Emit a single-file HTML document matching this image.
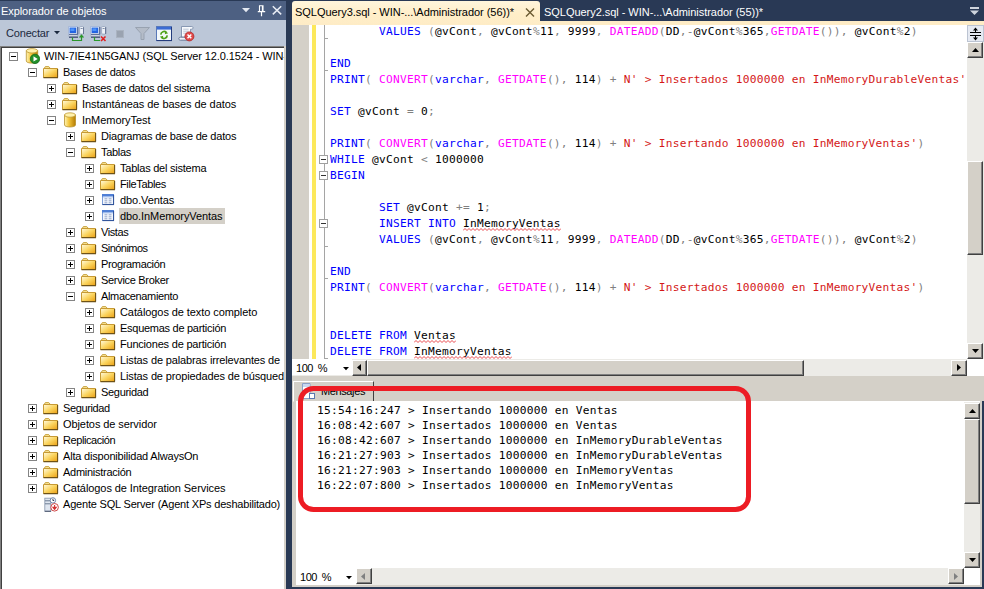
<!DOCTYPE html>
<html lang="es"><head><meta charset="utf-8"><title>SQL Server Management Studio</title>
<style>
html,body{margin:0;padding:0;}
body{width:984px;height:589px;overflow:hidden;background:#293955;position:relative;font-family:"Liberation Sans", "DejaVu Sans", sans-serif;font-size:11px;color:#000;}
.abs{position:absolute;}
#oe{left:0;top:0;width:286px;height:589px;background:#bcc7d8;overflow:hidden;}
#oe-title{left:0;top:1px;width:286px;height:19px;background:#4d6082;color:#fff;}
#oe-title span{position:absolute;left:1px;top:4px;font-size:11px;line-height:13px;white-space:nowrap;}
#oe-tb{left:0;top:20px;width:286px;height:26px;background:#bcc7d8;}
#tree{left:0;top:46px;width:284px;height:543px;background:#fff;border-left:1px solid #808080;border-top:1px solid #808080;box-sizing:border-box;overflow:hidden;}
#oe-right{left:284px;top:46px;width:2px;height:543px;background:#d4d0c8;}
.row{position:absolute;height:16px;white-space:nowrap;font-size:11px;line-height:16px;}
.row .t{position:absolute;top:0;height:16px;padding:0 2px;line-height:17px;}
.row .t.sel{background:#d4d0c8;}
.exp{position:absolute;width:7px;height:7px;border:1px solid #848484;background:#fff;top:4px;}
.exp i{position:absolute;left:1px;top:3px;width:5px;height:1px;background:#000;}
.exp b{position:absolute;left:3px;top:1px;width:1px;height:5px;background:#000;}
.ico{position:absolute;top:0;width:16px;height:16px;}
#tabs{left:292px;top:0;width:692px;height:25px;}
#tab1{left:0;top:1px;width:248px;height:24px;background:linear-gradient(#fff5dc,#ffeec8 55%,#feecc6);border-radius:3px 3px 0 0;}
#tabband{left:0;top:21px;width:692px;height:4px;background:#feecc6;}
.tabtxt{position:absolute;top:6px;font-size:11px;line-height:13px;white-space:nowrap;}
#ed{left:292px;top:25px;width:675px;height:334px;background:#fff;overflow:hidden;}
#ed-margin{left:0;top:0;width:17px;height:334px;background:#d4d0c8;}
#ed-yellow{left:20px;top:0;width:4px;height:334px;background:#fce85a;}
#ed-line{left:32px;top:0;width:1px;height:334px;background:#a5a5a5;}
.tick{position:absolute;left:32px;width:4px;height:1px;background:#a5a5a5;}
.obox{position:absolute;left:27px;width:7px;height:7px;border:1px solid #a0a0a0;background:#fff;}
.obox i{position:absolute;left:1px;top:3px;width:5px;height:1px;background:#333;}
.cl{position:absolute;left:38px;height:16px;line-height:16px;white-space:pre;font-family:"DejaVu Sans Mono", "Liberation Mono", monospace;font-size:11.2px;letter-spacing:0.258px;color:#000;margin-top:1px;}
.k{color:#0000ff;} .f{color:#ff00ff;} .s{color:#d41818;} .g{color:#808080;}
.sq{background-repeat:repeat-x;background-position:0 100%;}
.sb{background:#ecebe7;}
.btn{position:absolute;box-sizing:border-box;background:#d4d0c8;border:1px solid;border-color:#fff #404040 #404040 #fff;box-shadow:inset -1px -1px 0 #808080;}
.msg{position:absolute;left:21px;height:15px;line-height:15px;white-space:pre;font-family:"DejaVu Sans Mono", "Liberation Mono", monospace;font-size:11.2px;letter-spacing:0.258px;color:#000;margin-top:1px;}
</style></head>
<body>
<svg width="0" height="0" style="position:absolute"><defs><linearGradient id="fg" x1="0" y1="0" x2="1" y2="1"><stop offset="0" stop-color="#fffbe2"/><stop offset="0.5" stop-color="#fbd560"/><stop offset="1" stop-color="#ea9f14"/></linearGradient><linearGradient id="dg" x1="0" y1="0" x2="1" y2="0"><stop offset="0" stop-color="#fff6b8"/><stop offset="0.4" stop-color="#f4c63c"/><stop offset="1" stop-color="#b47c04"/></linearGradient></defs></svg>
<div id="oe" class="abs">
<div class="abs" style="left:0;top:0;width:286px;height:1px;background:#293955"></div>
<div id="oe-title" class="abs"><span id="ttl" style="letter-spacing:-0.072px;">Explorador de objetos</span><svg class="abs" style="left:240px;top:4px" width="46" height="13" viewBox="0 0 46 13"><path d="M2 3 H10 L6 7.2 Z" fill="#e4e9f2"/><path d="M19.5 6 V0.8 H23 V6 M22.4 1 V6" stroke="#fff" stroke-width="1.1" fill="none"/><path d="M17.8 6.6 H25.2 M21.5 7 V11.3" stroke="#fff" stroke-width="1.2" fill="none"/><path d="M32.8 1.2 L41.2 9.4 M41.2 1.2 L32.8 9.4" stroke="#e8ecf4" stroke-width="1.5" fill="none"/></svg></div>
<div id="oe-tb" class="abs">
<span class="abs" id="con" style="left:6px;top:7px;font-size:11px;line-height:13px;color:#1b293e;letter-spacing:-0.168px;">Conectar</span>
<svg class="abs" style="left:54px;top:11px" width="6" height="4"><path d="M0 0 H6 L3 3.2 Z" fill="#1b293e"/></svg>
<svg class="abs" style="left:68px;top:6px" width="16" height="16" viewBox="0 0 16 16"><rect x="0.6" y="0.6" width="9" height="7.6" fill="#dce6f6" stroke="#9fb2d6" stroke-width="0.8"/><rect x="1.6" y="1.6" width="6.6" height="5.4" fill="#2464e0"/><rect x="2.4" y="2.4" width="4" height="2.6" fill="#4c94fc"/><path d="M9.8 1 V8.4 H1" stroke="#34467c" stroke-width="0.9" fill="none"/><rect x="0.8" y="9" width="9" height="1.6" fill="#e4e9f2" stroke="#93a1ba" stroke-width="0.6"/><path d="M1 11.2 H10" stroke="#26325c" stroke-width="1"/><rect x="11.6" y="0.5" width="4" height="7.6" rx="1" fill="#eef2f8" stroke="#93a1ba" stroke-width="0.8"/><path d="M15.7 1.2 V8" stroke="#4a5878" stroke-width="0.8"/><rect x="12.6" y="2" width="2" height="1" fill="#7f8ea8"/><path d="M4.5 11.5 V14.5 H13.5 V11" stroke="#2a962a" stroke-width="1.2" fill="none"/><path d="M10.8 11.4 L13.5 8.2 L16.2 11.4 Z" fill="#2a962a"/></svg>
<svg class="abs" style="left:90px;top:6px" width="17" height="16" viewBox="0 0 17 16"><rect x="0.6" y="0.6" width="9" height="7.6" fill="#dce6f6" stroke="#9fb2d6" stroke-width="0.8"/><rect x="1.6" y="1.6" width="6.6" height="5.4" fill="#2464e0"/><rect x="2.4" y="2.4" width="4" height="2.6" fill="#4c94fc"/><path d="M9.8 1 V8.4 H1" stroke="#34467c" stroke-width="0.9" fill="none"/><rect x="0.8" y="9" width="9" height="1.6" fill="#e4e9f2" stroke="#93a1ba" stroke-width="0.6"/><path d="M1 11.2 H10" stroke="#26325c" stroke-width="1"/><rect x="11.6" y="0.5" width="4" height="7.6" rx="1" fill="#eef2f8" stroke="#93a1ba" stroke-width="0.8"/><path d="M15.7 1.2 V8" stroke="#4a5878" stroke-width="0.8"/><rect x="12.6" y="2" width="2" height="1" fill="#7f8ea8"/><path d="M4.5 11 V14.5 H10" stroke="#2a9a2a" stroke-width="1.2" fill="none"/><path d="M11 10.5 L15.5 15 M15.5 10.5 L11 15" stroke="#e02020" stroke-width="1.6" fill="none"/></svg>
<div class="abs" style="left:116px;top:10px;width:8px;height:8px;background:#9aa3b0;border:1px solid #aab3c0;box-sizing:border-box"></div>
<svg class="abs" style="left:135px;top:7px" width="15" height="13" viewBox="0 0 15 13"><path d="M0.5 0.5 H14.5 L9 6.5 V12.5 H6 V6.5 Z" fill="#b4bcc8" stroke="#98a2b0" stroke-width="1"/></svg>
<svg class="abs" style="left:156px;top:6px" width="16" height="16" viewBox="0 0 16 16"><rect x="0.5" y="0.5" width="15" height="14" fill="#f3f8fb" stroke="#5878b8" stroke-width="1"/><rect x="1" y="1" width="14" height="2.6" fill="#3c6cd4"/><path d="M0.5 14.6 H16 M15.6 1 V14.6" stroke="#203878" stroke-width="1" fill="none"/><path d="M4.8 8.6 A3.2 3.2 0 0 1 10.4 6.6 M11.2 9.4 A3.2 3.2 0 0 1 5.6 11.4" stroke="#4fa21c" stroke-width="1.7" fill="none"/><path d="M9.3 4.9 L12.2 7.2 L8.8 8.2 Z M6.7 13.1 L3.8 10.8 L7.2 9.8 Z" fill="#4fa21c"/></svg>
<svg class="abs" style="left:178px;top:5px" width="17" height="17" viewBox="0 0 17 17"><path d="M3.5 1.5 H13.8 C15.6 1.5 15.6 4.2 13.8 4.2 H12.5 V12.2 H3.5 Z" fill="#f8fafd" stroke="#7f90ac" stroke-width="0.9"/><path d="M2.4 12.2 H11 V15.2 H2.4 C0.4 15.2 0.4 12.2 2.4 12.2 Z" fill="#eef2f8" stroke="#5f7090" stroke-width="0.9"/><path d="M5.2 4.2 H10.6 M5.2 6.2 H10.6 M5.2 8.2 H9.6" stroke="#b4bfd0" stroke-width="0.9"/><circle cx="11.4" cy="11.4" r="4.5" fill="#e04a4a" stroke="#b42626" stroke-width="0.8"/><path d="M9.5 9.5 L13.3 13.3 M13.3 9.5 L9.5 13.3" stroke="#fff" stroke-width="1.5"/></svg>
</div>
<div id="tree" class="abs">
<div class="abs" style="left:0;top:0;width:283px;height:1px;background:#404040"></div><div class="abs" style="left:0;top:0;width:1px;height:543px;background:#404040"></div>
<div class="row" style="left:0;top:1px;width:283px">
<span class="exp" style="left:8px"><i></i></span>
<svg class="ico" style="left:23px" viewBox="0 0 16 16"><path d="M2.3 2.8 V13 C2.3 15.8 13.7 15.8 13.7 13 V2.8 Z" fill="url(#dg)" stroke="#b8902c" stroke-width="0.8"/><ellipse cx="8" cy="2.8" rx="5.7" ry="2.2" fill="#fff1ac" stroke="#c09a36" stroke-width="0.8"/><circle cx="11" cy="10.9" r="4.7" fill="#23902a" stroke="#176a1c" stroke-width="0.8"/><path d="M9.5 8.3 L13.7 10.9 L9.5 13.5 Z" fill="#fff"/></svg>
<span class="t" id="r0" style="left:41px;letter-spacing:-0.114px;">WIN-7IE41N5GANJ (SQL Server 12.0.1524 - WIN-</span>
</div>
<div class="row" style="left:0;top:17px;width:283px">
<span class="exp" style="left:27px"><i></i></span>
<svg class="ico" style="left:42px" viewBox="0 0 16 16"><path d="M1.5 4 L2.3 2.6 H5.8 L7 4 V5 H1.5 Z" fill="#f9e596" stroke="#c9a444" stroke-width="1"/><path d="M0.5 4.5 H14.5 V13.5 H0.5 Z" fill="url(#fg)" stroke="#c79a34" stroke-width="1"/><path d="M0.5 13.6 H15 M14.6 5 V13.6" stroke="#6e5216" stroke-width="1.1" fill="none"/></svg>
<span class="t" id="r1" style="left:60px;letter-spacing:-0.253px;">Bases de datos</span>
</div>
<div class="row" style="left:0;top:33px;width:283px">
<span class="exp" style="left:46px"><i></i><b></b></span>
<svg class="ico" style="left:61px" viewBox="0 0 16 16"><path d="M1.5 4 L2.3 2.6 H5.8 L7 4 V5 H1.5 Z" fill="#f9e596" stroke="#c9a444" stroke-width="1"/><path d="M0.5 4.5 H14.5 V13.5 H0.5 Z" fill="url(#fg)" stroke="#c79a34" stroke-width="1"/><path d="M0.5 13.6 H15 M14.6 5 V13.6" stroke="#6e5216" stroke-width="1.1" fill="none"/></svg>
<span class="t" id="r2" style="left:79px;letter-spacing:-0.251px;">Bases de datos del sistema</span>
</div>
<div class="row" style="left:0;top:49px;width:283px">
<span class="exp" style="left:46px"><i></i><b></b></span>
<svg class="ico" style="left:61px" viewBox="0 0 16 16"><path d="M1.5 4 L2.3 2.6 H5.8 L7 4 V5 H1.5 Z" fill="#f9e596" stroke="#c9a444" stroke-width="1"/><path d="M0.5 4.5 H14.5 V13.5 H0.5 Z" fill="url(#fg)" stroke="#c79a34" stroke-width="1"/><path d="M0.5 13.6 H15 M14.6 5 V13.6" stroke="#6e5216" stroke-width="1.1" fill="none"/></svg>
<span class="t" id="r3" style="left:79px;letter-spacing:-0.058px;">Instantáneas de bases de datos</span>
</div>
<div class="row" style="left:0;top:65px;width:283px">
<span class="exp" style="left:46px"><i></i></span>
<svg class="ico" style="left:61px" viewBox="0 0 16 16"><path d="M2.5 3 V13 C2.5 15.6 13.5 15.6 13.5 13 V3 Z" fill="url(#dg)" stroke="#b8902c" stroke-width="0.8"/><ellipse cx="8" cy="3" rx="5.5" ry="2.2" fill="#fff1ac" stroke="#c09a36" stroke-width="0.8"/></svg>
<span class="t" id="r4" style="left:79px;letter-spacing:-0.048px;">InMemoryTest</span>
</div>
<div class="row" style="left:0;top:81px;width:283px">
<span class="exp" style="left:65px"><i></i><b></b></span>
<svg class="ico" style="left:80px" viewBox="0 0 16 16"><path d="M1.5 4 L2.3 2.6 H5.8 L7 4 V5 H1.5 Z" fill="#f9e596" stroke="#c9a444" stroke-width="1"/><path d="M0.5 4.5 H14.5 V13.5 H0.5 Z" fill="url(#fg)" stroke="#c79a34" stroke-width="1"/><path d="M0.5 13.6 H15 M14.6 5 V13.6" stroke="#6e5216" stroke-width="1.1" fill="none"/></svg>
<span class="t" id="r5" style="left:98px;letter-spacing:-0.210px;">Diagramas de base de datos</span>
</div>
<div class="row" style="left:0;top:97px;width:283px">
<span class="exp" style="left:65px"><i></i></span>
<svg class="ico" style="left:80px" viewBox="0 0 16 16"><path d="M1.5 4 L2.3 2.6 H5.8 L7 4 V5 H1.5 Z" fill="#f9e596" stroke="#c9a444" stroke-width="1"/><path d="M0.5 4.5 H14.5 V13.5 H0.5 Z" fill="url(#fg)" stroke="#c79a34" stroke-width="1"/><path d="M0.5 13.6 H15 M14.6 5 V13.6" stroke="#6e5216" stroke-width="1.1" fill="none"/></svg>
<span class="t" id="r6" style="left:98px;letter-spacing:-0.299px;">Tablas</span>
</div>
<div class="row" style="left:0;top:113px;width:283px">
<span class="exp" style="left:84px"><i></i><b></b></span>
<svg class="ico" style="left:99px" viewBox="0 0 16 16"><path d="M1.5 4 L2.3 2.6 H5.8 L7 4 V5 H1.5 Z" fill="#f9e596" stroke="#c9a444" stroke-width="1"/><path d="M0.5 4.5 H14.5 V13.5 H0.5 Z" fill="url(#fg)" stroke="#c79a34" stroke-width="1"/><path d="M0.5 13.6 H15 M14.6 5 V13.6" stroke="#6e5216" stroke-width="1.1" fill="none"/></svg>
<span class="t" id="r7" style="left:117px;letter-spacing:-0.233px;">Tablas del sistema</span>
</div>
<div class="row" style="left:0;top:129px;width:283px">
<span class="exp" style="left:84px"><i></i><b></b></span>
<svg class="ico" style="left:99px" viewBox="0 0 16 16"><path d="M1.5 4 L2.3 2.6 H5.8 L7 4 V5 H1.5 Z" fill="#f9e596" stroke="#c9a444" stroke-width="1"/><path d="M0.5 4.5 H14.5 V13.5 H0.5 Z" fill="url(#fg)" stroke="#c79a34" stroke-width="1"/><path d="M0.5 13.6 H15 M14.6 5 V13.6" stroke="#6e5216" stroke-width="1.1" fill="none"/></svg>
<span class="t" id="r8" style="left:117px;letter-spacing:-0.353px;">FileTables</span>
</div>
<div class="row" style="left:0;top:145px;width:283px">
<span class="exp" style="left:84px"><i></i><b></b></span>
<svg class="ico" style="left:99px" viewBox="0 0 16 16"><rect x="2.5" y="2.5" width="11" height="10" fill="#f2f6fd" stroke="#7f9fd8" stroke-width="1"/><rect x="2" y="2" width="12" height="2.6" fill="#4f7fd6"/><rect x="3" y="4.4" width="10" height="1" fill="#a9c2ee"/><path d="M4.5 6.8 H7.3 M8.7 6.8 H11.5 M4.5 8.8 H7.3 M8.7 8.8 H11.5 M4.5 10.8 H7.3 M8.7 10.8 H11.5" stroke="#93a6c8" stroke-width="1" fill="none"/><path d="M2.5 12.6 H14 M13.6 3 V12.6" stroke="#2c4f96" stroke-width="1" fill="none"/></svg>
<span class="t" id="r9" style="left:117px;letter-spacing:-0.076px;">dbo.Ventas</span>
</div>
<div class="row" style="left:0;top:161px;width:283px">
<span class="exp" style="left:84px"><i></i><b></b></span>
<svg class="ico" style="left:99px" viewBox="0 0 16 16"><rect x="2.5" y="2.5" width="11" height="10" fill="#f2f6fd" stroke="#7f9fd8" stroke-width="1"/><rect x="2" y="2" width="12" height="2.6" fill="#4f7fd6"/><rect x="3" y="4.4" width="10" height="1" fill="#a9c2ee"/><path d="M4.5 6.8 H7.3 M8.7 6.8 H11.5 M4.5 8.8 H7.3 M8.7 8.8 H11.5 M4.5 10.8 H7.3 M8.7 10.8 H11.5" stroke="#93a6c8" stroke-width="1" fill="none"/><path d="M2.5 12.6 H14 M13.6 3 V12.6" stroke="#2c4f96" stroke-width="1" fill="none"/></svg>
<span class="t sel" id="r10" style="left:117px;margin-left:1px;padding-left:1px;letter-spacing:-0.081px;">dbo.InMemoryVentas</span>
</div>
<div class="row" style="left:0;top:177px;width:283px">
<span class="exp" style="left:65px"><i></i><b></b></span>
<svg class="ico" style="left:80px" viewBox="0 0 16 16"><path d="M1.5 4 L2.3 2.6 H5.8 L7 4 V5 H1.5 Z" fill="#f9e596" stroke="#c9a444" stroke-width="1"/><path d="M0.5 4.5 H14.5 V13.5 H0.5 Z" fill="url(#fg)" stroke="#c79a34" stroke-width="1"/><path d="M0.5 13.6 H15 M14.6 5 V13.6" stroke="#6e5216" stroke-width="1.1" fill="none"/></svg>
<span class="t" id="r11" style="left:98px;letter-spacing:-0.411px;">Vistas</span>
</div>
<div class="row" style="left:0;top:193px;width:283px">
<span class="exp" style="left:65px"><i></i><b></b></span>
<svg class="ico" style="left:80px" viewBox="0 0 16 16"><path d="M1.5 4 L2.3 2.6 H5.8 L7 4 V5 H1.5 Z" fill="#f9e596" stroke="#c9a444" stroke-width="1"/><path d="M0.5 4.5 H14.5 V13.5 H0.5 Z" fill="url(#fg)" stroke="#c79a34" stroke-width="1"/><path d="M0.5 13.6 H15 M14.6 5 V13.6" stroke="#6e5216" stroke-width="1.1" fill="none"/></svg>
<span class="t" id="r12" style="left:98px;letter-spacing:-0.540px;">Sinónimos</span>
</div>
<div class="row" style="left:0;top:209px;width:283px">
<span class="exp" style="left:65px"><i></i><b></b></span>
<svg class="ico" style="left:80px" viewBox="0 0 16 16"><path d="M1.5 4 L2.3 2.6 H5.8 L7 4 V5 H1.5 Z" fill="#f9e596" stroke="#c9a444" stroke-width="1"/><path d="M0.5 4.5 H14.5 V13.5 H0.5 Z" fill="url(#fg)" stroke="#c79a34" stroke-width="1"/><path d="M0.5 13.6 H15 M14.6 5 V13.6" stroke="#6e5216" stroke-width="1.1" fill="none"/></svg>
<span class="t" id="r13" style="left:98px;letter-spacing:-0.357px;">Programación</span>
</div>
<div class="row" style="left:0;top:225px;width:283px">
<span class="exp" style="left:65px"><i></i><b></b></span>
<svg class="ico" style="left:80px" viewBox="0 0 16 16"><path d="M1.5 4 L2.3 2.6 H5.8 L7 4 V5 H1.5 Z" fill="#f9e596" stroke="#c9a444" stroke-width="1"/><path d="M0.5 4.5 H14.5 V13.5 H0.5 Z" fill="url(#fg)" stroke="#c79a34" stroke-width="1"/><path d="M0.5 13.6 H15 M14.6 5 V13.6" stroke="#6e5216" stroke-width="1.1" fill="none"/></svg>
<span class="t" id="r14" style="left:98px;letter-spacing:-0.310px;">Service Broker</span>
</div>
<div class="row" style="left:0;top:241px;width:283px">
<span class="exp" style="left:65px"><i></i></span>
<svg class="ico" style="left:80px" viewBox="0 0 16 16"><path d="M1.5 4 L2.3 2.6 H5.8 L7 4 V5 H1.5 Z" fill="#f9e596" stroke="#c9a444" stroke-width="1"/><path d="M0.5 4.5 H14.5 V13.5 H0.5 Z" fill="url(#fg)" stroke="#c79a34" stroke-width="1"/><path d="M0.5 13.6 H15 M14.6 5 V13.6" stroke="#6e5216" stroke-width="1.1" fill="none"/></svg>
<span class="t" id="r15" style="left:98px;letter-spacing:-0.353px;">Almacenamiento</span>
</div>
<div class="row" style="left:0;top:257px;width:283px">
<span class="exp" style="left:84px"><i></i><b></b></span>
<svg class="ico" style="left:99px" viewBox="0 0 16 16"><path d="M1.5 4 L2.3 2.6 H5.8 L7 4 V5 H1.5 Z" fill="#f9e596" stroke="#c9a444" stroke-width="1"/><path d="M0.5 4.5 H14.5 V13.5 H0.5 Z" fill="url(#fg)" stroke="#c79a34" stroke-width="1"/><path d="M0.5 13.6 H15 M14.6 5 V13.6" stroke="#6e5216" stroke-width="1.1" fill="none"/></svg>
<span class="t" id="r16" style="left:117px;letter-spacing:-0.082px;">Catálogos de texto completo</span>
</div>
<div class="row" style="left:0;top:273px;width:283px">
<span class="exp" style="left:84px"><i></i><b></b></span>
<svg class="ico" style="left:99px" viewBox="0 0 16 16"><path d="M1.5 4 L2.3 2.6 H5.8 L7 4 V5 H1.5 Z" fill="#f9e596" stroke="#c9a444" stroke-width="1"/><path d="M0.5 4.5 H14.5 V13.5 H0.5 Z" fill="url(#fg)" stroke="#c79a34" stroke-width="1"/><path d="M0.5 13.6 H15 M14.6 5 V13.6" stroke="#6e5216" stroke-width="1.1" fill="none"/></svg>
<span class="t" id="r17" style="left:117px;letter-spacing:-0.276px;">Esquemas de partición</span>
</div>
<div class="row" style="left:0;top:289px;width:283px">
<span class="exp" style="left:84px"><i></i><b></b></span>
<svg class="ico" style="left:99px" viewBox="0 0 16 16"><path d="M1.5 4 L2.3 2.6 H5.8 L7 4 V5 H1.5 Z" fill="#f9e596" stroke="#c9a444" stroke-width="1"/><path d="M0.5 4.5 H14.5 V13.5 H0.5 Z" fill="url(#fg)" stroke="#c79a34" stroke-width="1"/><path d="M0.5 13.6 H15 M14.6 5 V13.6" stroke="#6e5216" stroke-width="1.1" fill="none"/></svg>
<span class="t" id="r18" style="left:117px;letter-spacing:-0.209px;">Funciones de partición</span>
</div>
<div class="row" style="left:0;top:305px;width:283px">
<span class="exp" style="left:84px"><i></i><b></b></span>
<svg class="ico" style="left:99px" viewBox="0 0 16 16"><path d="M1.5 4 L2.3 2.6 H5.8 L7 4 V5 H1.5 Z" fill="#f9e596" stroke="#c9a444" stroke-width="1"/><path d="M0.5 4.5 H14.5 V13.5 H0.5 Z" fill="url(#fg)" stroke="#c79a34" stroke-width="1"/><path d="M0.5 13.6 H15 M14.6 5 V13.6" stroke="#6e5216" stroke-width="1.1" fill="none"/></svg>
<span class="t" id="r19" style="left:117px;letter-spacing:-0.129px;">Listas de palabras irrelevantes de</span>
</div>
<div class="row" style="left:0;top:321px;width:283px">
<span class="exp" style="left:84px"><i></i><b></b></span>
<svg class="ico" style="left:99px" viewBox="0 0 16 16"><path d="M1.5 4 L2.3 2.6 H5.8 L7 4 V5 H1.5 Z" fill="#f9e596" stroke="#c9a444" stroke-width="1"/><path d="M0.5 4.5 H14.5 V13.5 H0.5 Z" fill="url(#fg)" stroke="#c79a34" stroke-width="1"/><path d="M0.5 13.6 H15 M14.6 5 V13.6" stroke="#6e5216" stroke-width="1.1" fill="none"/></svg>
<span class="t" id="r20" style="left:117px;letter-spacing:-0.130px;">Listas de propiedades de búsqued</span>
</div>
<div class="row" style="left:0;top:337px;width:283px">
<span class="exp" style="left:65px"><i></i><b></b></span>
<svg class="ico" style="left:80px" viewBox="0 0 16 16"><path d="M1.5 4 L2.3 2.6 H5.8 L7 4 V5 H1.5 Z" fill="#f9e596" stroke="#c9a444" stroke-width="1"/><path d="M0.5 4.5 H14.5 V13.5 H0.5 Z" fill="url(#fg)" stroke="#c79a34" stroke-width="1"/><path d="M0.5 13.6 H15 M14.6 5 V13.6" stroke="#6e5216" stroke-width="1.1" fill="none"/></svg>
<span class="t" id="r21" style="left:98px;letter-spacing:-0.306px;">Seguridad</span>
</div>
<div class="row" style="left:0;top:353px;width:283px">
<span class="exp" style="left:27px"><i></i><b></b></span>
<svg class="ico" style="left:42px" viewBox="0 0 16 16"><path d="M1.5 4 L2.3 2.6 H5.8 L7 4 V5 H1.5 Z" fill="#f9e596" stroke="#c9a444" stroke-width="1"/><path d="M0.5 4.5 H14.5 V13.5 H0.5 Z" fill="url(#fg)" stroke="#c79a34" stroke-width="1"/><path d="M0.5 13.6 H15 M14.6 5 V13.6" stroke="#6e5216" stroke-width="1.1" fill="none"/></svg>
<span class="t" id="r22" style="left:60px;letter-spacing:-0.373px;">Seguridad</span>
</div>
<div class="row" style="left:0;top:369px;width:283px">
<span class="exp" style="left:27px"><i></i><b></b></span>
<svg class="ico" style="left:42px" viewBox="0 0 16 16"><path d="M1.5 4 L2.3 2.6 H5.8 L7 4 V5 H1.5 Z" fill="#f9e596" stroke="#c9a444" stroke-width="1"/><path d="M0.5 4.5 H14.5 V13.5 H0.5 Z" fill="url(#fg)" stroke="#c79a34" stroke-width="1"/><path d="M0.5 13.6 H15 M14.6 5 V13.6" stroke="#6e5216" stroke-width="1.1" fill="none"/></svg>
<span class="t" id="r23" style="left:60px;letter-spacing:-0.084px;">Objetos de servidor</span>
</div>
<div class="row" style="left:0;top:385px;width:283px">
<span class="exp" style="left:27px"><i></i><b></b></span>
<svg class="ico" style="left:42px" viewBox="0 0 16 16"><path d="M1.5 4 L2.3 2.6 H5.8 L7 4 V5 H1.5 Z" fill="#f9e596" stroke="#c9a444" stroke-width="1"/><path d="M0.5 4.5 H14.5 V13.5 H0.5 Z" fill="url(#fg)" stroke="#c79a34" stroke-width="1"/><path d="M0.5 13.6 H15 M14.6 5 V13.6" stroke="#6e5216" stroke-width="1.1" fill="none"/></svg>
<span class="t" id="r24" style="left:60px;letter-spacing:-0.425px;">Replicación</span>
</div>
<div class="row" style="left:0;top:401px;width:283px">
<span class="exp" style="left:27px"><i></i><b></b></span>
<svg class="ico" style="left:42px" viewBox="0 0 16 16"><path d="M1.5 4 L2.3 2.6 H5.8 L7 4 V5 H1.5 Z" fill="#f9e596" stroke="#c9a444" stroke-width="1"/><path d="M0.5 4.5 H14.5 V13.5 H0.5 Z" fill="url(#fg)" stroke="#c79a34" stroke-width="1"/><path d="M0.5 13.6 H15 M14.6 5 V13.6" stroke="#6e5216" stroke-width="1.1" fill="none"/></svg>
<span class="t" id="r25" style="left:60px;letter-spacing:-0.191px;">Alta disponibilidad AlwaysOn</span>
</div>
<div class="row" style="left:0;top:417px;width:283px">
<span class="exp" style="left:27px"><i></i><b></b></span>
<svg class="ico" style="left:42px" viewBox="0 0 16 16"><path d="M1.5 4 L2.3 2.6 H5.8 L7 4 V5 H1.5 Z" fill="#f9e596" stroke="#c9a444" stroke-width="1"/><path d="M0.5 4.5 H14.5 V13.5 H0.5 Z" fill="url(#fg)" stroke="#c79a34" stroke-width="1"/><path d="M0.5 13.6 H15 M14.6 5 V13.6" stroke="#6e5216" stroke-width="1.1" fill="none"/></svg>
<span class="t" id="r26" style="left:60px;letter-spacing:-0.267px;">Administración</span>
</div>
<div class="row" style="left:0;top:433px;width:283px">
<span class="exp" style="left:27px"><i></i><b></b></span>
<svg class="ico" style="left:42px" viewBox="0 0 16 16"><path d="M1.5 4 L2.3 2.6 H5.8 L7 4 V5 H1.5 Z" fill="#f9e596" stroke="#c9a444" stroke-width="1"/><path d="M0.5 4.5 H14.5 V13.5 H0.5 Z" fill="url(#fg)" stroke="#c79a34" stroke-width="1"/><path d="M0.5 13.6 H15 M14.6 5 V13.6" stroke="#6e5216" stroke-width="1.1" fill="none"/></svg>
<span class="t" id="r27" style="left:60px;letter-spacing:-0.082px;">Catálogos de Integration Services</span>
</div>
<div class="row" style="left:0;top:449px;width:283px">
<svg class="ico" style="left:42px" viewBox="0 0 16 16"><rect x="1.8" y="2.2" width="6" height="13" fill="#dfe6f0" stroke="#8f9db2" stroke-width="0.9"/><path d="M2 4.8 H7.6 M2 7.8 H7.6" stroke="#5f6f88" stroke-width="0.9"/><path d="M1.8 15.3 H8" stroke="#4a566c" stroke-width="1"/><circle cx="9.9" cy="4.4" r="2.7" fill="#fff" stroke="#6f86ac" stroke-width="1"/><path d="M9.9 2.8 V4.5 H11.2" stroke="#22304c" stroke-width="0.9" fill="none"/><circle cx="11.6" cy="11.3" r="3.8" fill="#fff" stroke="#cf4848" stroke-width="1"/><path d="M11.6 9 V12.4 M10 11.4 L11.6 13.4 L13.2 11.4 Z" stroke="#d43030" stroke-width="1.1" fill="#d43030"/></svg>
<span class="t" id="r28" style="left:60px;letter-spacing:-0.189px;">Agente SQL Server (Agent XPs deshabilitado)</span>
</div>
</div>
<div id="oe-right" class="abs"></div>
</div>
<div id="tabs" class="abs">
<div id="tabband" class="abs"></div>
<div id="tab1" class="abs"></div>
<span class="tabtxt" id="tt1" style="left:3px;color:#000;letter-spacing:-0.038px;">SQLQuery3.sql - WIN-...\Administrador (56))*</span>
<svg class="abs" style="left:233px;top:8px" width="10" height="9" viewBox="0 0 10 9"><path d="M1 0.5 L9 8.5 M9 0.5 L1 8.5" stroke="#6b5b32" stroke-width="1.4" fill="none"/></svg>
<span class="tabtxt" id="tt2" style="left:252px;color:#fff;letter-spacing:-0.038px;">SQLQuery2.sql - WIN-...\Administrador (55))*</span>
<svg class="abs" style="left:678px;top:7px" width="9" height="8" viewBox="0 0 9 8"><path d="M0 0 H9 V2 H0 Z M0 3.5 H9 L4.5 8 Z" fill="#ced4dd"/></svg>
</div>
<div id="ed" class="abs">
<div id="ed-margin" class="abs"></div><div id="ed-yellow" class="abs"></div><div id="ed-line" class="abs"></div>
<div class="tick" style="top:13px"></div>
<div class="tick" style="top:45px"></div>
<div class="tick" style="top:221px"></div>
<div class="tick" style="top:253px"></div>
<div class="tick" style="top:333px"></div>
<div class="obox" style="top:130px"><i></i></div>
<div class="obox" style="top:146px"><i></i></div>
<div class="obox" style="top:194px"><i></i></div>
<div class="cl" style="top:-2px">       <span class="k">VALUES</span> <span class="g">(</span>@vCont<span class="g">,</span> @vCont<span class="g">%</span>11<span class="g">,</span> 9999<span class="g">,</span> <span class="f">DATEADD</span><span class="g">(</span>DD<span class="g">,-</span>@vCont<span class="g">%</span>365<span class="g">,</span><span class="f">GETDATE</span><span class="g">()),</span> @vCont<span class="g">%</span>2<span class="g">)</span></div>
<div class="cl" style="top:30px"><span class="k">END</span></div>
<div class="cl" style="top:46px"><span class="k">PRINT</span><span class="g">(</span> <span class="f">CONVERT</span><span class="g">(</span><span class="k">varchar</span><span class="g">,</span> <span class="f">GETDATE</span><span class="g">(),</span> 114<span class="g">)</span> <span class="g">+</span> <span class="s">N&#x27; &gt; Insertados 1000000 en InMemoryDurableVentas&#x27;</span><span class="g">)</span></div>
<div class="cl" style="top:78px"><span class="k">SET</span> @vCont <span class="g">=</span> 0<span class="g">;</span></div>
<div class="cl" style="top:110px"><span class="k">PRINT</span><span class="g">(</span> <span class="f">CONVERT</span><span class="g">(</span><span class="k">varchar</span><span class="g">,</span> <span class="f">GETDATE</span><span class="g">(),</span> 114<span class="g">)</span> <span class="g">+</span> <span class="s">N&#x27; &gt; Insertando 1000000 en InMemoryVentas&#x27;</span><span class="g">)</span></div>
<div class="cl" style="top:126px"><span class="k">WHILE</span> @vCont <span class="g">&lt;</span> 1000000</div>
<div class="cl" style="top:142px"><span class="k">BEGIN</span></div>
<div class="cl" style="top:174px">       <span class="k">SET</span> @vCont <span class="g">+=</span> 1<span class="g">;</span></div>
<div class="cl" style="top:190px">       <span class="k">INSERT</span> <span class="k">INTO</span> <span class="sq">InMemoryVentas</span></div>
<div class="cl" style="top:206px">       <span class="k">VALUES</span> <span class="g">(</span>@vCont<span class="g">,</span> @vCont<span class="g">%</span>11<span class="g">,</span> 9999<span class="g">,</span> <span class="f">DATEADD</span><span class="g">(</span>DD<span class="g">,-</span>@vCont<span class="g">%</span>365<span class="g">,</span><span class="f">GETDATE</span><span class="g">()),</span> @vCont<span class="g">%</span>2<span class="g">)</span></div>
<div class="cl" style="top:238px"><span class="k">END</span></div>
<div class="cl" style="top:254px"><span class="k">PRINT</span><span class="g">(</span> <span class="f">CONVERT</span><span class="g">(</span><span class="k">varchar</span><span class="g">,</span> <span class="f">GETDATE</span><span class="g">(),</span> 114<span class="g">)</span> <span class="g">+</span> <span class="s">N&#x27; &gt; Insertados 1000000 en InMemoryVentas&#x27;</span><span class="g">)</span></div>
<div class="cl" style="top:302px"><span class="k">DELETE</span> <span class="k">FROM</span> <span class="sq">Ventas</span></div>
<div class="cl" style="top:318px"><span class="k">DELETE</span> <span class="k">FROM</span> <span class="sq">InMemoryVentas</span></div>
<svg class="abs" style="left:171px;top:203px" width="98" height="3" viewBox="0 0 98 3"><path d="M0 2.5 L2 0.5 L4 2.5 L6 0.5 L8 2.5 L10 0.5 L12 2.5 L14 0.5 L16 2.5 L18 0.5 L20 2.5 L22 0.5 L24 2.5 L26 0.5 L28 2.5 L30 0.5 L32 2.5 L34 0.5 L36 2.5 L38 0.5 L40 2.5 L42 0.5 L44 2.5 L46 0.5 L48 2.5 L50 0.5 L52 2.5 L54 0.5 L56 2.5 L58 0.5 L60 2.5 L62 0.5 L64 2.5 L66 0.5 L68 2.5 L70 0.5 L72 2.5 L74 0.5 L76 2.5 L78 0.5 L80 2.5 L82 0.5 L84 2.5 L86 0.5 L88 2.5 L90 0.5 L92 2.5 L94 0.5 L96 2.5 L98 0.5" stroke="#e8383a" stroke-width="0.9" fill="none"/></svg>
<svg class="abs" style="left:122px;top:315px" width="42" height="3" viewBox="0 0 42 3"><path d="M0 2.5 L2 0.5 L4 2.5 L6 0.5 L8 2.5 L10 0.5 L12 2.5 L14 0.5 L16 2.5 L18 0.5 L20 2.5 L22 0.5 L24 2.5 L26 0.5 L28 2.5 L30 0.5 L32 2.5 L34 0.5 L36 2.5 L38 0.5 L40 2.5 L42 0.5" stroke="#e8383a" stroke-width="0.9" fill="none"/></svg>
<svg class="abs" style="left:122px;top:331px" width="98" height="3" viewBox="0 0 98 3"><path d="M0 2.5 L2 0.5 L4 2.5 L6 0.5 L8 2.5 L10 0.5 L12 2.5 L14 0.5 L16 2.5 L18 0.5 L20 2.5 L22 0.5 L24 2.5 L26 0.5 L28 2.5 L30 0.5 L32 2.5 L34 0.5 L36 2.5 L38 0.5 L40 2.5 L42 0.5 L44 2.5 L46 0.5 L48 2.5 L50 0.5 L52 2.5 L54 0.5 L56 2.5 L58 0.5 L60 2.5 L62 0.5 L64 2.5 L66 0.5 L68 2.5 L70 0.5 L72 2.5 L74 0.5 L76 2.5 L78 0.5 L80 2.5 L82 0.5 L84 2.5 L86 0.5 L88 2.5 L90 0.5 L92 2.5 L94 0.5 L96 2.5 L98 0.5" stroke="#e8383a" stroke-width="0.9" fill="none"/></svg>
</div>
<div class="abs sb" style="left:967px;top:25px;width:17px;height:334px"></div>
<div class="abs" style="left:967px;top:25px;width:17px;height:17px;background:#e6eaf2;border:1px solid #bcc4d2;box-sizing:border-box"></div>
<svg class="abs" style="left:967px;top:26px" width="17" height="16" viewBox="0 0 17 16"><path d="M3 6.5 H14 M3 9.5 H14 M8.5 2 V6 M8.5 10 V14" stroke="#000" stroke-width="1" fill="none"/><path d="M6 4.5 L8.5 1.5 L11 4.5 Z M6 11.5 L8.5 14.5 L11 11.5 Z" fill="#000"/></svg>
<div class="btn" style="left:967px;top:42px;width:16px;height:16px"></div>
<svg class="abs" style="left:972px;top:48px" width="7" height="4"><path d="M0 4 L3.5 0 L7 4 Z" fill="#000"/></svg>
<div class="btn" style="left:967px;top:161px;width:16px;height:94px"></div>
<div class="btn" style="left:967px;top:343px;width:16px;height:16px"></div>
<svg class="abs" style="left:972px;top:349px" width="7" height="4"><path d="M0 0 L3.5 4 L7 0 Z" fill="#000"/></svg>
<div class="abs sb" style="left:292px;top:359px;width:675px;height:17px"></div>
<div class="abs" style="left:967px;top:359px;width:17px;height:17px;background:#fff"></div>
<div class="abs" style="left:292px;top:359px;width:60px;height:16px;background:#fff"></div>
<span class="abs" id="z1" style="left:296px;top:362px;font-size:11px;line-height:13px;letter-spacing:-0.45px;word-spacing:2.2px">100 %</span>
<svg class="abs" style="left:343px;top:367px" width="6" height="4"><path d="M0 0 H6 L3 3.2 Z" fill="#000"/></svg>
<div class="btn" style="left:352px;top:360px;width:15px;height:16px"></div>
<svg class="abs" style="left:357px;top:364px" width="4" height="7"><path d="M4 0 L0 3.5 L4 7 Z" fill="#000"/></svg>
<div class="btn" style="left:367px;top:360px;width:437px;height:16px"></div>
<div class="btn" style="left:951px;top:360px;width:16px;height:16px"></div>
<svg class="abs" style="left:957px;top:364px" width="4" height="7"><path d="M0 0 L4 3.5 L0 7 Z" fill="#000"/></svg>
<div class="abs" style="left:292px;top:376px;width:692px;height:213px;background:#d4d0c8"></div>
<div class="abs" style="left:982px;top:401px;width:2px;height:188px;background:#293955"></div>
<div class="abs" style="left:292px;top:587px;width:692px;height:2px;background:#293955"></div>
<div class="abs" style="left:293px;top:381px;width:81px;height:21px;background:#d4d0c8;border:1px solid;border-color:#fff #404040 transparent #fff;box-sizing:border-box"></div>
<svg class="abs" style="left:301px;top:383px" width="14" height="16" viewBox="0 0 14 16"><path d="M1.5 0.5 H9 V15.5 H1.5 Z" fill="#fff" stroke="#8aa0c8" stroke-width="1"/><rect x="2" y="1" width="6.5" height="3" fill="#c8d8f0"/><rect x="8.5" y="10.5" width="5" height="5" fill="#fff" stroke="#5a78b0" stroke-width="1"/></svg>
<span class="abs" id="mtab" style="left:321px;top:385px;font-size:11px;line-height:13px;letter-spacing:-0.385px;">Mensajes</span>
<div class="abs" style="left:296px;top:401px;width:684px;height:1px;background:#fff"></div>
<div class="abs" style="left:296px;top:402px;width:668px;height:166px;background:#fff;overflow:hidden">
<div class="msg" style="top:0px">15:54:16:247 &gt; Insertando 1000000 en Ventas</div>
<div class="msg" style="top:15px">16:08:42:607 &gt; Insertados 1000000 en Ventas</div>
<div class="msg" style="top:30px">16:08:42:607 &gt; Insertando 1000000 en InMemoryDurableVentas</div>
<div class="msg" style="top:45px">16:21:27:903 &gt; Insertados 1000000 en InMemoryDurableVentas</div>
<div class="msg" style="top:60px">16:21:27:903 &gt; Insertando 1000000 en InMemoryVentas</div>
<div class="msg" style="top:75px">16:22:07:800 &gt; Insertados 1000000 en InMemoryVentas</div>
</div>
<div class="abs sb" style="left:964px;top:402px;width:16px;height:166px"></div>
<div class="btn" style="left:964px;top:403px;width:16px;height:16px"></div>
<svg class="abs" style="left:969px;top:409px" width="7" height="4"><path d="M0 4 L3.5 0 L7 4 Z" fill="#000"/></svg>
<div class="btn" style="left:964px;top:419px;width:16px;height:85px"></div>
<div class="btn" style="left:964px;top:552px;width:16px;height:16px"></div>
<svg class="abs" style="left:969px;top:558px" width="7" height="4"><path d="M0 0 L3.5 4 L7 0 Z" fill="#000"/></svg>
<div class="abs sb" style="left:296px;top:568px;width:668px;height:17px"></div>
<div class="abs" style="left:964px;top:568px;width:16px;height:17px;background:#fff"></div>
<div class="abs" style="left:296px;top:568px;width:60px;height:17px;background:#fff"></div>
<span class="abs" id="z2" style="left:300px;top:571px;font-size:11px;line-height:13px;letter-spacing:-0.45px;word-spacing:2.2px">100 %</span>
<svg class="abs" style="left:346px;top:576px" width="6" height="4"><path d="M0 0 H6 L3 3.2 Z" fill="#000"/></svg>
<div class="btn" style="left:356px;top:568px;width:16px;height:16px"></div>
<svg class="abs" style="left:361px;top:573px" width="4" height="7"><path d="M4 0 L0 3.5 L4 7 Z" fill="#808080"/></svg>
<div class="btn" style="left:948px;top:568px;width:16px;height:16px"></div>
<svg class="abs" style="left:954px;top:573px" width="4" height="7"><path d="M0 0 L4 3.5 L0 7 Z" fill="#808080"/></svg>
<svg class="abs" style="left:0;top:0;pointer-events:none" width="984" height="589"><rect x="300.5" y="388.5" width="448" height="121" rx="13" ry="13" fill="none" stroke="#ed1c24" stroke-width="5"/></svg>
</body></html>
